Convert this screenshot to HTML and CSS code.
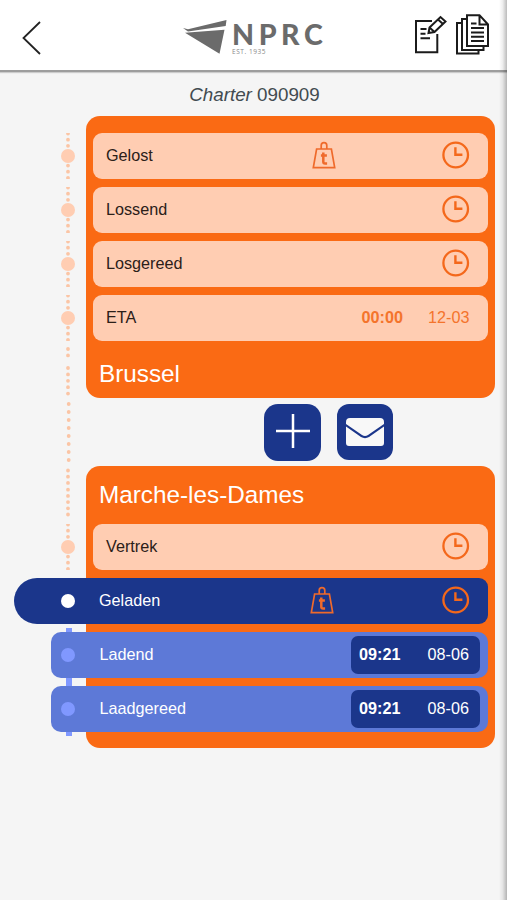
FILE: index.html
```
<!DOCTYPE html>
<html lang="nl">
<head>
<meta charset="utf-8">
<title>Charter 090909</title>
<link rel="stylesheet" href="styles.css">
</head>
<body>
<svg class="defs" aria-hidden="true">
  <symbol id="clock" viewBox="0 0 28 28"><circle cx="13.700" cy="14" r="12.3" fill="none" stroke="#f4681b" stroke-width="2.300"/><path d="M13.400 6.300V13.800h7" fill="none" stroke="#f4681b" stroke-width="2.400"/></symbol>
  <symbol id="weight" viewBox="0 0 24 28"><path d="M4.6 8h14.8L22.700 26.600H1.300zM9.200 8V4.500a2.800 2.800 0 0 1 5.600 0V8" fill="none" stroke="#ef6a2b" stroke-width="1.700"/><path d="M11.300 11.500v9.200q0 1.800 1.800 1.800h2M8.900 14.500h6" fill="none" stroke="#ef6a2b" stroke-width="2.500"/></symbol>
  <symbol id="rail" viewBox="0 0 34 46"><path d="M17 .6v12.500M17 32.600v13" fill="none" stroke="#fbc5a5" stroke-width="3.800" stroke-linecap="round" stroke-dasharray="0 6.100"/><circle cx="17" cy="23" r="7" fill="#ffcdb2"/></symbol>
</svg>
<header class="topbar">
  <svg class="back" viewBox="0 0 20 36"><path d="M18 2 1.500 18 18 34" fill="none" stroke="#222" stroke-width="1.800"/></svg>
  <div class="logo">
    <svg class="ship" viewBox="0 0 45 35"><path d="M0 8 5 9.200 43.500 0l-.8 6L5 11.500zM2 12.800l39.500-3-5 24z" fill="#6b6b6b"/></svg>
    <div class="brand"><b>NPRC</b><small>EST. 1935</small></div>
  </div>
  <svg class="tools" viewBox="0 0 77 42" fill="none" stroke="#1b1b1b" stroke-width="2">
    <path d="M18 7H2v31.300h21.300V20M6.500 15h6M6.500 19.700h5M6.500 24.300h9.500"/>
    <path d="m15.500 13.500 11-10.500 5 4.500-11 10.500-6 1zM24 5.500l5 4.500M15.500 13.500l5 4.500"/>
    <path d="M53 1.200h12.500L74 10.500V32H53zM65.500 1v9.500H74M57 9.500h5.500M57 14h13M57 18.400h13M57 22.700h13M57 27h13" />
    <path d="M53 5h-5v31h21.500V32M48 9h-5v30.500h21.500V36"/>
  </svg>
</header>
<main>
  <h1><i>Charter</i> 090909</h1>
  <section class="stop first">
    <ol>
      <li><svg class="rail"><use href="#rail"/></svg><div class="step"><span>Gelost</span><svg class="weight"><use href="#weight"/></svg><svg class="clock"><use href="#clock"/></svg></div></li>
      <li><svg class="rail"><use href="#rail"/></svg><div class="step"><span>Lossend</span><svg class="clock"><use href="#clock"/></svg></div></li>
      <li><svg class="rail"><use href="#rail"/></svg><div class="step"><span>Losgereed</span><svg class="clock"><use href="#clock"/></svg></div></li>
      <li><svg class="rail"><use href="#rail"/></svg><div class="step"><span>ETA</span><div class="time"><b>00:00</b><span>12-03</span></div></div></li>
    </ol>
    <h2>Brussel</h2>
    <svg class="link" viewBox="0 0 8 174"><path d="M4 2v12.500M4 21v26.500" stroke-dasharray="0 6.400"/><path d="M4.700 57v58" stroke-dasharray="0 8"/><path d="M4 123.500v12.500M4 142.700v26" stroke-dasharray="0 6.200"/></svg>
  </section>
  <div class="actions">
    <button class="add" aria-label="Toevoegen"><svg viewBox="0 0 34 34"><path d="M17 0v34M0 17h34" stroke="#fff" stroke-width="2.500"/></svg></button>
    <button class="mail" aria-label="Bericht"><svg viewBox="0 0 38 28"><path d="M4 0h30q4 0 4 4v2L22 17q-3 2-6 0L0 6V4q0-4 4-4zM0 8.500 15 19q4 2.300 8 0L38 8.500V25q0 3-3 3H3q-3 0-3-3z" fill="#f8f8f8"/></svg></button>
  </div>
  <section class="stop">
    <h2>Marche-les-Dames</h2>
    <ol>
      <li><svg class="rail"><use href="#rail"/></svg><div class="step"><span>Vertrek</span><svg class="clock"><use href="#clock"/></svg></div></li>
      <li class="current"><i class="dot"></i><span>Geladen</span><svg class="weight"><use href="#weight"/></svg><svg class="clock"><use href="#clock"/></svg></li>
      <li class="done"><i class="dot"></i><span>Ladend</span><div class="time"><b>09:21</b><span>08-06</span></div></li>
      <li class="done"><i class="dot"></i><span>Laadgereed</span><div class="time"><b>09:21</b><span>08-06</span></div></li>
    </ol>
  </section>
</main>
<div class="edge"></div>
</body>
</html>
```
FILE: styles.css
```
* { box-sizing: border-box; }
body { margin: 0; height: 900px; overflow: hidden; background: #f5f5f5; font: 16.200px "Liberation Sans", Arial, sans-serif; color: #2b2019; }
svg { display: block; flex: none; }
.defs { position: absolute; width: 0; height: 0; }
.topbar { display: flex; align-items: flex-start; height: 72px; background: #fff; border-bottom: 2px solid #9d9d9d; box-shadow: 0 1px 1px #ccc; }
.back { width: 20px; height: 36px; margin: 20px 0 0 22px; }
.logo { display: flex; margin: 20px 0 0 141px; width: 145px; }
.ship { width: 45px; height: 35px; }
.brand { margin-left: 4px; color: #6b6b6b; white-space: nowrap; }
.brand b { display: block; font: 900 28.500px/28px Lato, sans-serif; letter-spacing: 4.600px; }
.brand small { display: block; font: 6.500px/8px "Open Sans", sans-serif; letter-spacing: .55px; color: #888; }
.tools { width: 77px; height: 42px; margin: 14px 0 0 86px; }
h1 { margin: 0; height: 44px; padding-left: 2px; text-align: center; font-size: 18.800px; line-height: 45px; font-weight: 400; color: #424b50; }
.stop { position: relative; height: 282px; margin: 0 12.500px 0 86px; padding: 0 6.500px 16px; border-radius: 14px; background: #fa6a14; }
.first { padding-top: 17px; }
ol { display: grid; gap: 8px; margin: 0; padding: 0; list-style: none; }
li { display: flex; align-items: center; height: 46px; margin-left: -41.500px; }
.rail { width: 34px; height: 46px; }
.step { display: flex; align-items: center; flex: 1; height: 46px; margin-left: 7.500px; padding: 0 18.500px 2px 13.500px; border-radius: 9px; background: #ffcdb2; }
.step > span { padding-top: 1px; }
.clock { width: 28px; height: 28px; margin-left: auto; }
.weight { width: 24px; height: 28px; margin-left: auto; }
.weight + .clock { margin-left: 106px; }
.time { display: flex; justify-content: space-between; align-items: center; width: 108px; margin-left: auto; padding-top: 1px; color: #f4742c; }
h2 { margin: 0; padding-left: 6.500px; font-size: 24.300px; line-height: 58px; font-weight: 400; color: #fff; }
.first h2 { line-height: 66px; }
.link { position: absolute; left: -22px; top: 231px; width: 8px; height: 174px; fill: none; stroke: #fbc5a5; stroke-width: 3.800px; stroke-linecap: round; }
.actions { display: flex; gap: 16px; height: 68px; padding: 6px 0 0 264px; }
button { display: grid; place-items: center; margin: 0; padding: 0; border: 0; background: #1b368b; }
.add { width: 57px; height: 57px; padding-bottom: 4px; border-radius: 14px; }
.add svg { width: 34px; height: 34px; }
.mail { width: 56px; height: 56px; border-radius: 12px; }
.mail svg { width: 38px; height: 28px; }
.current, .done { position: relative; color: #fff; border-radius: 10px; background: #5d79d7; padding: 0 8px 1px 10px; }
.current { margin-left: -78.500px; padding: 0 18.500px 2px 46.500px; border-radius: 23px 9px 9px 23px; background: #1b368b; }
.dot { width: 14px; height: 14px; margin-right: 24.500px; border-radius: 50%; background: #8098ff; }
.current .dot { position: relative; top: 1px; background: #fff; }
.current .weight + .clock { margin-left: 108px; }
.done .time { width: 129px; height: 38px; padding: 0 11px 0 8px; border-radius: 7px; background: #1b368b; color: #fff; }
.done::before, .done:last-child::after { content: ""; position: absolute; left: 15px; top: -8px; width: 6px; height: 8px; background: #8098ff; }
.done:last-child::after { top: 46px; height: 4px; }
.current + .done::before { top: -4px; height: 4px; }
.edge { position: absolute; top: 0; right: 0; width: 8px; height: 900px; background: linear-gradient(90deg, #0000, #0001 45%, #0004); }
```
